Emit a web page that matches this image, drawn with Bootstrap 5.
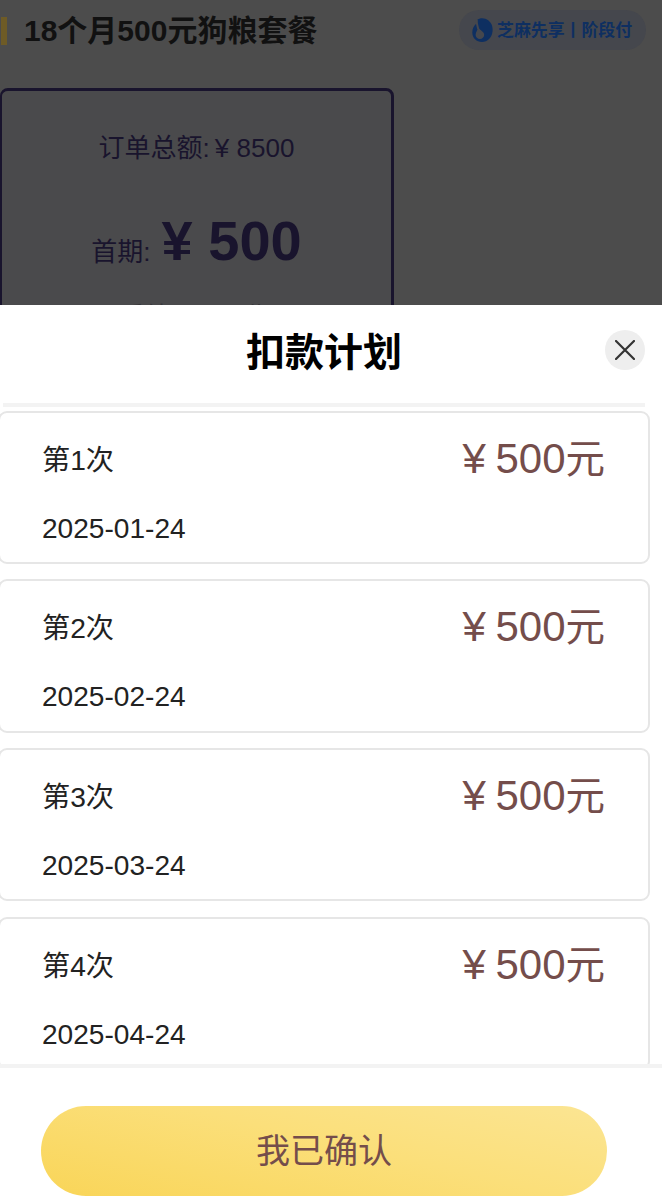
<!DOCTYPE html>
<html lang="zh-CN">
<head>
<meta charset="utf-8">
<meta name="viewport" content="width=device-width, initial-scale=1">
<title>扣款计划</title>
<link rel="stylesheet" href="https://cdn.jsdelivr.net/npm/bootstrap@5.3.0/dist/css/bootstrap.min.css">
<style>
body{font-family:"Liberation Sans","Noto Sans CJK SC",sans-serif;background:#4c4c4c;height:1198px}
.backdrop-page{height:305px;background:#4c4c4c}
.plan-head{height:62px;padding:0 16px 0 1px}
.accent-bar{width:6px;height:28px;margin-top:-1px;background:#6e5b26}
.plan-title{font-size:30px;line-height:62px;margin-left:17px;color:#111}
.zhima{width:187px;height:40px;margin-top:-2px;padding-left:13px;background:#45474d;color:#0e2f61;font-size:16.9px;gap:4px}
.zhima span{padding-top:2px}
.zhima svg{width:21px;height:24px}
.plan-option{width:394px;height:260px;margin-top:26px;border:3px solid #19142d;border-left-width:2px;border-radius:8px;background:#4a4a4c;color:#19142d}
.total{font-size:26px;line-height:40px;margin-top:37px}
.total .yen{margin-left:5px}
.first-pay{height:70px;margin-top:38px}
.first-pay .term{font-size:26px;position:relative;top:1px}
.first-pay .sum{font-size:56px;line-height:70px;margin-left:11px}
.rest{font-size:25.5px;line-height:36px;margin-top:22px;color:#37373a}
.sheet{height:893px}
.sheet-head{height:98px}
.sheet-title{font-size:39px;line-height:96px;padding-right:14px;color:#000}
.close-btn{right:17px;top:25px;width:40px;height:40px;background:#eee;border:0}
.rule-top{height:4px;margin:0 17px 0 3px;background:#f3f3f3}
.plans{height:657px;padding-top:3.5px}
.plan-item{width:652px;height:153.4px;margin:0 0 15.3px -2px;border:2px solid #e6e6e6;border-radius:9px;padding:0 43px 0 42px;color:#222}
.nth{font-size:28.2px;line-height:44px;margin-top:25px}
.date{font-size:28.1px;line-height:40px;margin-top:27px}
.amount{font-size:42px;line-height:60px;margin-top:16px;color:#744d4b}
.amount .yen{margin-right:-2px}
.amount .unit{font-size:39.5px}
.yen{display:inline-block}
.sheet-foot{border-top:4px solid #f3f3f3;padding:38px 55px 0 41px}
.confirm{height:90px;font-size:34px;color:#744d4b;border:0;background:linear-gradient(193deg,#fbe593 0%,#fbdf7a 45%,#f9d558 100%)}
</style>
</head>
<body class="overflow-hidden">
<main class="backdrop-page overflow-hidden">
  <header class="plan-head d-flex align-items-center">
    <span class="accent-bar"></span>
    <h1 class="plan-title fw-bold mb-0">18个月500元狗粮套餐</h1>
    <div class="zhima ms-auto rounded-pill d-flex align-items-center fw-bold text-nowrap">
      <svg viewBox="0 0 21 24" aria-hidden="true"><path d="M5 2C8-.5 13-.2 16.500 2.500 20 5.200 21 9.500 20.500 13.500 19.900 19.500 15.500 24 10 24 4.500 24 .3 20 .3 14.500.3 10.500 1.800 7.500 5 5Z" fill="#0e2f61"/><path d="M4.800 1.500C4.300 5 5.500 8 6.200 11" fill="none" stroke="#45474d" stroke-width="2"/><path d="M6 9C6 12 3.600 13.800 3.600 16.800a4.300 4.300 0 0 0 8.600 0C12.200 13.500 8.500 13 6 9Z" fill="#45474d"/></svg>
      <span>芝麻先享丨阶段付</span>
    </div>
  </header>
  <section class="plan-option text-center text-nowrap">
    <div class="total">订单总额:<span class="yen">¥</span> 8500</div>
    <div class="first-pay d-flex justify-content-center align-items-baseline"><span class="term">首期:</span><strong class="sum"><span class="yen">¥</span> 500</strong></div>
    <div class="rest">后续500/17期</div>
  </section>
</main>
<section class="sheet bg-white d-flex flex-column">
  <header class="sheet-head position-relative flex-shrink-0">
    <h2 class="sheet-title text-center fw-bold mb-0">扣款计划</h2>
    <button class="close-btn position-absolute rounded-circle p-0 d-flex align-items-center justify-content-center" aria-label="关闭"><svg width="20" height="20" viewBox="0 0 20 20"><path d="M1 1 19 19M19 1 1 19" stroke="#333" stroke-width="2.200" stroke-linecap="round"/></svg></button>
  </header>
  <div class="rule-top flex-shrink-0"></div>
  <div class="plans overflow-hidden flex-shrink-0">
    <article class="plan-item d-flex justify-content-between"><div><div class="nth">第1次</div><div class="date">2025-01-24</div></div><div class="amount"><span class="yen">¥</span> 500<span class="unit">元</span></div></article>
    <article class="plan-item d-flex justify-content-between"><div><div class="nth">第2次</div><div class="date">2025-02-24</div></div><div class="amount"><span class="yen">¥</span> 500<span class="unit">元</span></div></article>
    <article class="plan-item d-flex justify-content-between"><div><div class="nth">第3次</div><div class="date">2025-03-24</div></div><div class="amount"><span class="yen">¥</span> 500<span class="unit">元</span></div></article>
    <article class="plan-item d-flex justify-content-between"><div><div class="nth">第4次</div><div class="date">2025-04-24</div></div><div class="amount"><span class="yen">¥</span> 500<span class="unit">元</span></div></article>
  </div>
  <footer class="sheet-foot flex-grow-1"><button class="confirm w-100 rounded-pill p-0 d-block">我已确认</button></footer>
</section>
<script src="https://cdn.jsdelivr.net/npm/bootstrap@5.3.0/dist/js/bootstrap.bundle.min.js"></script>
</body>
</html>
